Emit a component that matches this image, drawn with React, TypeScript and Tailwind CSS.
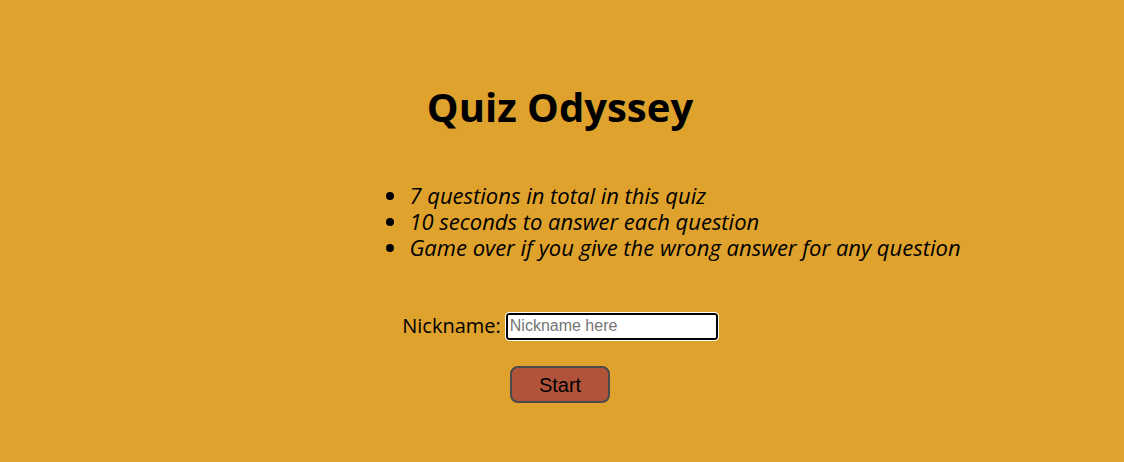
import React from 'react';

export default function App() {
  return (
    <div className="min-h-[462px] w-full bg-[#dfa22d] text-black" style={{ fontFamily: '"Open Sans", sans-serif' }}>
      <div className="flex flex-col items-center pr-[4px] pt-[79px]">
        <h1 className="text-[40px] font-bold leading-[56px]">Quiz Odyssey</h1>
        <ul className="mt-[47px] ml-[226px] list-disc pl-[24px] text-[22px] italic leading-[26px]">
          <li>7 questions in total in this quiz</li>
          <li>10 seconds to answer each question</li>
          <li>Game over if you give the wrong answer for any question</li>
        </ul>
        <div className="mt-[51px] flex items-center gap-[5px]">
          <label className="text-[20px]">Nickname:</label>
          <input
            type="text"
            placeholder="Nickname here"
            className="h-[27px] w-[212px] rounded-[3px] border-2 border-black bg-white px-[2px] text-[16px] outline outline-1 outline-white placeholder:text-[#757575]"
            style={{ fontFamily: '"Liberation Sans", Arial, sans-serif' }}
          />
        </div>
        <button
          className="mt-[25px] h-[37px] w-[100px] rounded-[8px] border-2 border-[#4a4a4a] bg-[#b0533a] text-[20px] text-black"
          style={{ fontFamily: '"Liberation Sans", Arial, sans-serif' }}
        >
          Start
        </button>
      </div>
    </div>
  );
}
